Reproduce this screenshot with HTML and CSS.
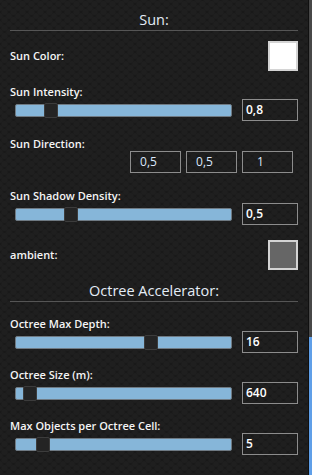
FILE: index.html
```html
<!DOCTYPE html>
<html lang="en">
<head>
  <meta charset="UTF-8" />
  <title>Scene Settings</title>
  <link rel="stylesheet" href="styles.css">
</head>
<body>
  <div class="app">
    <!-- Settings panel -->
    <div class="panel">
      <h2 class="section-title">Sun:</h2>

      <div class="color-row">
        <span class="label">Sun Color:</span>
        <div class="swatch swatch-white"></div>
      </div>

      <div class="field first">
        <div class="label">Sun Intensity:</div>
        <div class="control">
          <div class="slider"><div class="thumb" style="left: 28px"></div></div>
          <div class="value">0,8</div>
        </div>
      </div>

      <div class="field">
        <div class="label">Sun Direction:</div>
        <div class="vector">
          <div class="vec-box">0,5</div>
          <div class="vec-box">0,5</div>
          <div class="vec-box">1</div>
        </div>
      </div>

      <div class="field">
        <div class="label">Sun Shadow Density:</div>
        <div class="control">
          <div class="slider"><div class="thumb" style="left: 48px"></div></div>
          <div class="value">0,5</div>
        </div>
      </div>

      <div class="color-row ambient">
        <span class="label">ambient:</span>
        <div class="swatch swatch-gray"></div>
      </div>

      <h2 class="section-title octree">Octree Accelerator:</h2>

      <div class="field octree-field">
        <div class="label">Octree Max Depth:</div>
        <div class="control">
          <div class="slider"><div class="thumb" style="left: 128px"></div></div>
          <div class="value">16</div>
        </div>
      </div>

      <div class="field octree-field">
        <div class="label">Octree Size (m):</div>
        <div class="control">
          <div class="slider"><div class="thumb" style="left: 7px"></div></div>
          <div class="value">640</div>
        </div>
      </div>

      <div class="field octree-field">
        <div class="label">Max Objects per Octree Cell:</div>
        <div class="control">
          <div class="slider"><div class="thumb" style="left: 20px"></div></div>
          <div class="value">5</div>
        </div>
      </div>
    </div>

    <!-- Scrollbar -->
    <div class="scrollbar"><div class="scroll-thumb"></div></div>
  </div>
</body>
</html>
```

FILE: styles.css
```css
/* Base */
body {
  margin: 0;
  font-family: 'Open Sans', 'Noto Sans', sans-serif;
  background-color: #191919;
  background-image:
    radial-gradient(circle at 50% 50%, #1f1f1f 2.5px, transparent 3.5px),
    radial-gradient(circle at 50% 50%, #1f1f1f 2.5px, transparent 3.5px);
  background-size: 9px 8px;
  background-position: 0 0, 4.5px 4px;
  color: #f2f2f2;
  overflow: hidden;
}
.app {
  display: flex;
  height: 475px;
}
/* Panel */
.panel {
  flex: 1;
  padding: 0 10px;
}
.section-title {
  margin: 0;
  padding-top: 10px;
  height: 20px;
  line-height: 20px;
  font-size: 14.5px;
  font-weight: 400;
  text-align: center;
  color: #e4ecf6;
  border-bottom: 1px solid #555;
}
.section-title.octree {
  margin-top: 1px;
}
.label {
  font-size: 11px;
  font-weight: 600;
  line-height: 14px;
  height: 14px;
  color: #f4f4f4;
}
/* Color swatches */
.color-row {
  display: flex;
  justify-content: space-between;
  align-items: center;
  margin-top: 10px;
  height: 30px;
}
.color-row.ambient {
  margin-top: 15px;
}
.swatch {
  width: 26px;
  height: 26px;
  border: 2px solid #d4d4d4;
}
.swatch-white {
  background: #fff;
}
.swatch-gray {
  background: #666;
}
/* Slider fields */
.field {
  margin-top: 16px;
}
.field.first {
  margin-top: 14px;
}
.field.octree-field {
  margin-top: 15px;
}
.control {
  display: flex;
  align-items: center;
  height: 22px;
  padding-left: 5px;
  gap: 10px;
}
.slider {
  position: relative;
  width: 215px;
  height: 11px;
  background: #86b6d9;
  border: 1px solid #6f7a83;
  border-radius: 2px;
}
.thumb {
  position: absolute;
  top: -2px;
  width: 12px;
  height: 13px;
  background: #242424;
  border: 1px solid #3c3c3c;
  border-radius: 2px;
}
.value {
  box-sizing: border-box;
  width: 56px;
  height: 22px;
  border: 1px solid #8c8c8c;
  padding-left: 3px;
  font-size: 12px;
  font-weight: 600;
  line-height: 20px;
  color: #fff;
}
/* Vector inputs */
.vector {
  display: flex;
  justify-content: flex-end;
  gap: 5px;
  padding-right: 5px;
  height: 22px;
}
.vec-box {
  box-sizing: border-box;
  width: 51px;
  height: 22px;
  border: 1px solid #8c8c8c;
  padding-right: 14px;
  text-align: center;
  font-size: 12px;
  line-height: 20px;
  color: #dbe8fb;
}
/* Scrollbar */
.scrollbar {
  width: 4px;
  background: #474747;
  border-left: 1px solid #101010;
  display: flex;
  flex-direction: column;
}
.scroll-thumb {
  margin-top: 337px;
  flex: 1;
  background: #5f9fe8;
}
```
